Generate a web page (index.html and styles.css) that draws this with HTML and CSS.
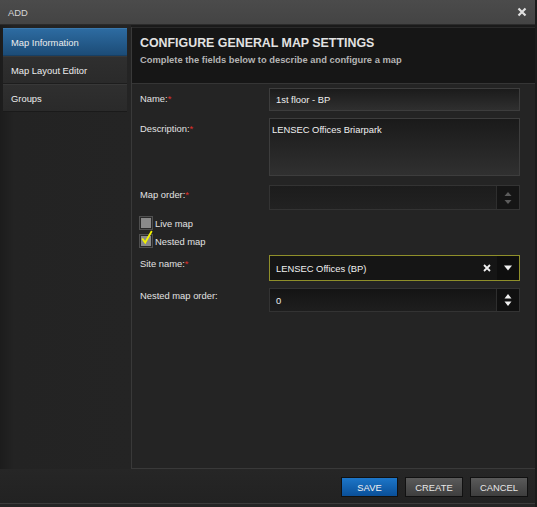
FILE: index.html
```html
<!DOCTYPE html>
<html>
<head>
<meta charset="utf-8">
<link rel="stylesheet" href="styles.css">
</head>
<body>
<div class="dialog">
  <div class="titlebar">
    <span class="title">ADD</span>
    <svg class="close" width="10" height="10" viewBox="0 0 10 10"><path d="M1.5 1.5L8.5 8.5M8.5 1.5L1.5 8.5" stroke="#e0e0e0" stroke-width="2.2"/></svg>
  </div>
  <div class="main">
    <div class="nav">
      <div class="nav-item active">Map Information</div>
      <div class="nav-item">Map Layout Editor</div>
      <div class="nav-item">Groups</div>
    </div>
    <div class="panel">
      <div class="panel-header">
        <div class="heading">CONFIGURE GENERAL MAP SETTINGS</div>
        <div class="subheading">Complete the fields below to describe and configure a map</div>
      </div>
      <div class="form">
        <div class="row r-name">
          <div class="label l5">Name:<span class="req">*</span></div>
          <div class="field input h23">1st floor - BP</div>
        </div>
        <div class="row r-desc">
          <div class="label l5">Description:<span class="req">*</span></div>
          <div class="field textarea">LENSEC Offices Briarpark</div>
        </div>
        <div class="row r-order">
          <div class="label l4">Map order:<span class="req">*</span></div>
          <div class="field spin h25">
            <div class="spin-val"></div>
            <div class="spin-btns disabled">
              <svg width="8" height="14" viewBox="0 0 8 14"><path d="M0.5 5L4 1L7.5 5Z M0.5 9L4 13L7.5 9Z" fill="#5c5c5c"/></svg>
            </div>
          </div>
        </div>
        <div class="check-row c-live">
          <span class="box"></span><span class="check-label">Live map</span>
        </div>
        <div class="check-row c-nested">
          <span class="box">
            <svg class="tick" width="12" height="15" viewBox="0 0 12 15"><path d="M1.2 8.5L4.2 12.5L10.8 1" stroke="#f2f200" stroke-width="1.8" fill="none"/></svg>
          </span><span class="check-label">Nested map</span>
        </div>
        <div class="row r-site">
          <div class="label l3">Site name:<span class="req">*</span></div>
          <div class="field select h26">
            <div class="select-val">LENSEC Offices (BP)</div>
            <svg class="clear" width="8" height="8" viewBox="0 0 8 8"><path d="M1 1L7 7M7 1L1 7" stroke="#f0f0f0" stroke-width="1.8"/></svg>
            <div class="select-btn">
              <svg width="8" height="6" viewBox="0 0 8 6"><path d="M0 0.5H8L4 5.5Z" fill="#f0f0f0"/></svg>
            </div>
          </div>
        </div>
        <div class="row r-norder">
          <div class="label l2">Nested map order:</div>
          <div class="field spin h24">
            <div class="spin-val">0</div>
            <div class="spin-btns">
              <svg width="8" height="14" viewBox="0 0 8 14"><path d="M0.5 5.5L4 1L7.5 5.5Z M0.5 8.5L4 13L7.5 8.5Z" fill="#f0f0f0"/></svg>
            </div>
          </div>
        </div>
      </div>
    </div>
  </div>
  <div class="footer">
    <button class="btn primary">SAVE</button>
    <button class="btn">CREATE</button>
    <button class="btn">CANCEL</button>
  </div>
</div>
</body>
</html>
```

FILE: styles.css
```css
html, body {
  margin: 0;
  padding: 0;
  background: #1c1c1c;
}
body {
  font-family: "Liberation Sans", Arial, sans-serif;
  font-size: 9.4px;
  color: #e4e4e4;
}
.dialog {
  width: 537px;
  height: 507px;
  background: #252525;
  display: flex;
  flex-direction: column;
  box-sizing: border-box;
  border-right: 2px solid #1b1b1b;
}
.titlebar {
  height: 25px;
  flex: none;
  background: linear-gradient(#4b4b4b, #444444);
  border-bottom: 1px solid #2b2b2b;
  box-sizing: border-box;
  display: flex;
  align-items: center;
  justify-content: space-between;
  padding: 0 8px 0 8px;
}
.title {
  color: #d4d4d4;
  font-size: 9.4px;
}
.close { display: block; }

.main {
  display: flex;
  height: 444px;
  flex: none;
  background: #1a1a1a;
}
.nav {
  width: 131px;
  flex: none;
  box-sizing: border-box;
  padding: 3px 4px 0 3px;
  background: linear-gradient(90deg, #1c1c1c 0, #232323 14px, #242424 100%);
}
.nav-item {
  height: 28px;
  box-sizing: border-box;
  padding-left: 8px;
  display: flex;
  align-items: center;
  background: linear-gradient(#2f2f2f, #2a2a2a);
  border-top: 1px solid #383838;
  border-bottom: 1px solid #1d1d1d;
  color: #ededed;
}
.nav-item.active {
  background: linear-gradient(#2d6ba1, #1c4c77);
  border-top: 1px solid #3a78ad;
  border-bottom: 1px solid #173f63;
}
.nav-item:last-child { border-bottom: 1px solid #1a1a1a; }

.panel {
  flex: 1;
  margin-top: 2px;
  border-left: 1px solid #393939;
  border-bottom: 1px solid #393939;
  background: #242424;
  display: flex;
  flex-direction: column;
}
.panel-header {
  height: 57px;
  box-sizing: border-box;
  background: #161616;
  border-top: 1px solid #2a2a2a;
  border-bottom: 1px solid #353535;
  padding: 8px 8px 0 8px;
}
.heading {
  font-size: 12.4px;
  font-weight: bold;
  color: #e2e2e2;
  line-height: 15px;
}
.subheading {
  margin-top: 3px;
  font-size: 9.35px;
  font-weight: bold;
  color: #b4b4b4;
  line-height: 12px;
}
.form {
  padding: 4px 14px 0 8px;
  display: flex;
  flex-direction: column;
}
.row {
  display: flex;
  align-items: flex-start;
}
.label {
  width: 129px;
  flex: none;
  line-height: 12px;
  color: #e2e2e2;
}
.l5 { padding-top: 5px; }
.l4 { padding-top: 4px; }
.l3 { padding-top: 3px; }
.l2 { padding-top: 2px; }
.req { color: #e0302a; }
.field {
  width: 251px;
  box-sizing: border-box;
  border: 1px solid #3d3d3d;
  color: #f0f0f0;
}
.h23 { height: 23px; }
.h24 { height: 24px; }
.h25 { height: 25px; }
.h26 { height: 26px; }
.input {
  background: linear-gradient(#1b1b1b, #2f2f2f);
  padding: 0 6px;
  display: flex;
  align-items: center;
}
.r-desc { margin-top: 7px; }
.textarea {
  height: 58px;
  background: linear-gradient(#1a1a1a, #303030);
  padding: 5px 2px 4px;
  line-height: 12px;
}
.r-order { margin-top: 9px; }
.spin {
  display: flex;
  background: linear-gradient(#1c1c1c, #222222);
  border-color: #333333;
}
.spin-val {
  flex: 1;
  padding: 0 6px;
  display: flex;
  align-items: center;
}
.spin-btns {
  width: 22px;
  background: #101010;
  border-left: 1px solid #2e2e2e;
  display: flex;
  align-items: center;
  justify-content: center;
}
.spin-btns.disabled { background: #151515; }
.r-norder { margin-top: 7px; }
.r-norder .spin { background: linear-gradient(#141414, #1e1e1e); }

.check-row {
  display: flex;
  align-items: center;
  height: 12px;
}
.c-live { margin-top: 7px; }
.c-nested { margin-top: 6px; }
.box {
  width: 12px;
  height: 12px;
  box-sizing: border-box;
  background: #8a8a8a;
  border: 1px solid #2a2a2a;
  box-shadow: 0 0 0 1px #505050;
  position: relative;
  flex: none;
}
.tick {
  position: absolute;
  left: 0;
  top: -6px;
}
.check-label {
  margin-left: 3px;
  color: #e2e2e2;
  padding-top: 1px;
}
.r-site { margin-top: 8px; }
.select {
  display: flex;
  align-items: center;
  background: #151515;
  border: 1px solid #8f8f2a;
}
.select-val {
  flex: 1;
  padding: 0 6px;
}
.clear {
  margin-right: 6px;
}
.select-btn {
  width: 22px;
  align-self: stretch;
  background: #0e0e0e;
  display: flex;
  align-items: center;
  justify-content: center;
}

.footer {
  height: 35px;
  flex: none;
  box-sizing: border-box;
  display: flex;
  justify-content: flex-end;
  align-items: flex-start;
  gap: 7px;
  padding: 8px 7px 0 0;
  background: linear-gradient(#262626, #222222);
  border-bottom: 1px solid #3c3c3c;
}
.btn {
  width: 58px;
  height: 20px;
  box-sizing: border-box;
  font-family: "Liberation Sans", Arial, sans-serif;
  font-size: 9.4px;
  color: #e8e8e8;
  border: 1px solid #111111;
  background: linear-gradient(#5a5a5a, #3e3e3e);
  padding: 0;
}
.btn.primary {
  width: 57px;
  background: linear-gradient(#1d76c8, #0a4f98);
  color: #f2f2f2;
}
```
